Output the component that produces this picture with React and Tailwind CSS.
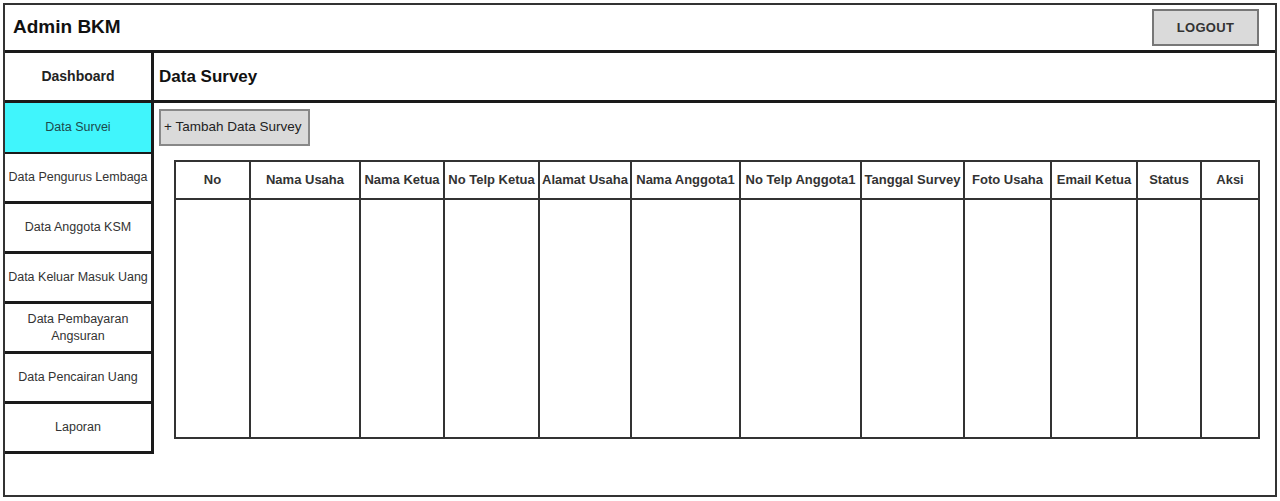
import React from 'react';

const menu = [
    'Data Pengurus Lembaga',
    'Data Anggota KSM',
    'Data Keluar Masuk Uang',
    'Data Pembayaran Angsuran',
    'Data Pencairan Uang',
    'Laporan'
];

const columns = [
    { label: 'No', w: 'w-[75px]' },
    { label: 'Nama Usaha', w: 'w-[110px]' },
    { label: 'Nama Ketua', w: 'w-[84px]' },
    { label: 'No Telp Ketua', w: 'w-[95px]' },
    { label: 'Alamat Usaha', w: 'w-[92px]' },
    { label: 'Nama Anggota1', w: 'w-[109px]' },
    { label: 'No Telp Anggota1', w: 'w-[121px]' },
    { label: 'Tanggal Survey', w: 'w-[103px]' },
    { label: 'Foto Usaha', w: 'w-[87px]' },
    { label: 'Email Ketua', w: 'w-[86px]' },
    { label: 'Status', w: 'w-[64px]' },
    { label: 'Aksi', w: 'w-[58px]' }
];

const App = () => {
    return (
        <div className="w-[1280px] h-[501px] bg-white pt-[3px] pl-[3px] font-['Liberation_Sans',Arial,sans-serif] text-[#222]">
            <div className="w-[1274px] h-[494px] border-2 border-[#333] flex flex-col">
                {/* header */}
                <div className="h-[48px] flex items-center justify-between pl-[8px] pr-[16px] border-b-[3px] border-[#1a1a1a]">
                    <h1 className="text-[19px] font-bold text-[#111]">Admin BKM</h1>
                    <button className="w-[107px] h-[37px] bg-[#dadada] border-2 border-[#777] text-[13px] font-bold tracking-wide text-[#333]">
                        LOGOUT
                    </button>
                </div>

                <div className="flex flex-1">
                    {/* sidebar */}
                    <div className="w-[149px] shrink-0 flex flex-col">
                        <div className="h-[50px] flex items-center justify-center border-r-[3px] border-b-[3px] border-[#1a1a1a] text-[14px] font-bold text-[#222]">
                            Dashboard
                        </div>
                        <div className="h-[51px] flex items-center justify-center bg-[#40f5fc] border-r-[3px] border-b-[2px] border-[#1a1a1a] text-[12.5px] text-[#1d4a4c]">
                            Data Survei
                        </div>
                        {menu.map((item) => (
                            <div
                                key={item}
                                className="h-[50px] flex items-center justify-center text-center whitespace-nowrap leading-[17px] border-r-[3px] border-b-[3px] border-[#1a1a1a] text-[12.5px] text-[#333]"
                            >
                                {item === 'Data Pembayaran Angsuran' ? (
                                    <span>Data Pembayaran<br />Angsuran</span>
                                ) : item}
                            </div>
                        ))}
                    </div>

                    {/* main */}
                    <div className="flex-1 flex flex-col">
                        <div className="h-[50px] flex items-center pl-[5px] border-b-[3px] border-[#1a1a1a]">
                            <h2 className="text-[17px] font-bold text-[#111]">Data Survey</h2>
                        </div>
                        <div className="pl-[5px] pt-[6px]">
                            <button className="w-[151px] h-[37px] bg-[#dadada] border-2 border-[#888] text-[13.5px] text-[#222] text-left pl-[3px] whitespace-nowrap">
                                + Tambah Data Survey
                            </button>
                        </div>
                        <div className="pl-[20px] pt-[14px]">
                            <table className="border-collapse border-2 border-[#333] table-fixed">
                                <thead>
                                    <tr className="h-[38px]">
                                        {columns.map((c) => (
                                            <th
                                                key={c.label}
                                                className={`${c.w} border-2 border-[#333] text-[13px] font-bold text-[#333] whitespace-nowrap p-0`}
                                            >
                                                {c.label}
                                            </th>
                                        ))}
                                    </tr>
                                </thead>
                                <tbody>
                                    <tr className="h-[239px]">
                                        {columns.map((c) => (
                                            <td key={c.label} className="border-2 border-[#333]"></td>
                                        ))}
                                    </tr>
                                </tbody>
                            </table>
                        </div>
                    </div>
                </div>
            </div>
        </div>
    );
};

export default App;
